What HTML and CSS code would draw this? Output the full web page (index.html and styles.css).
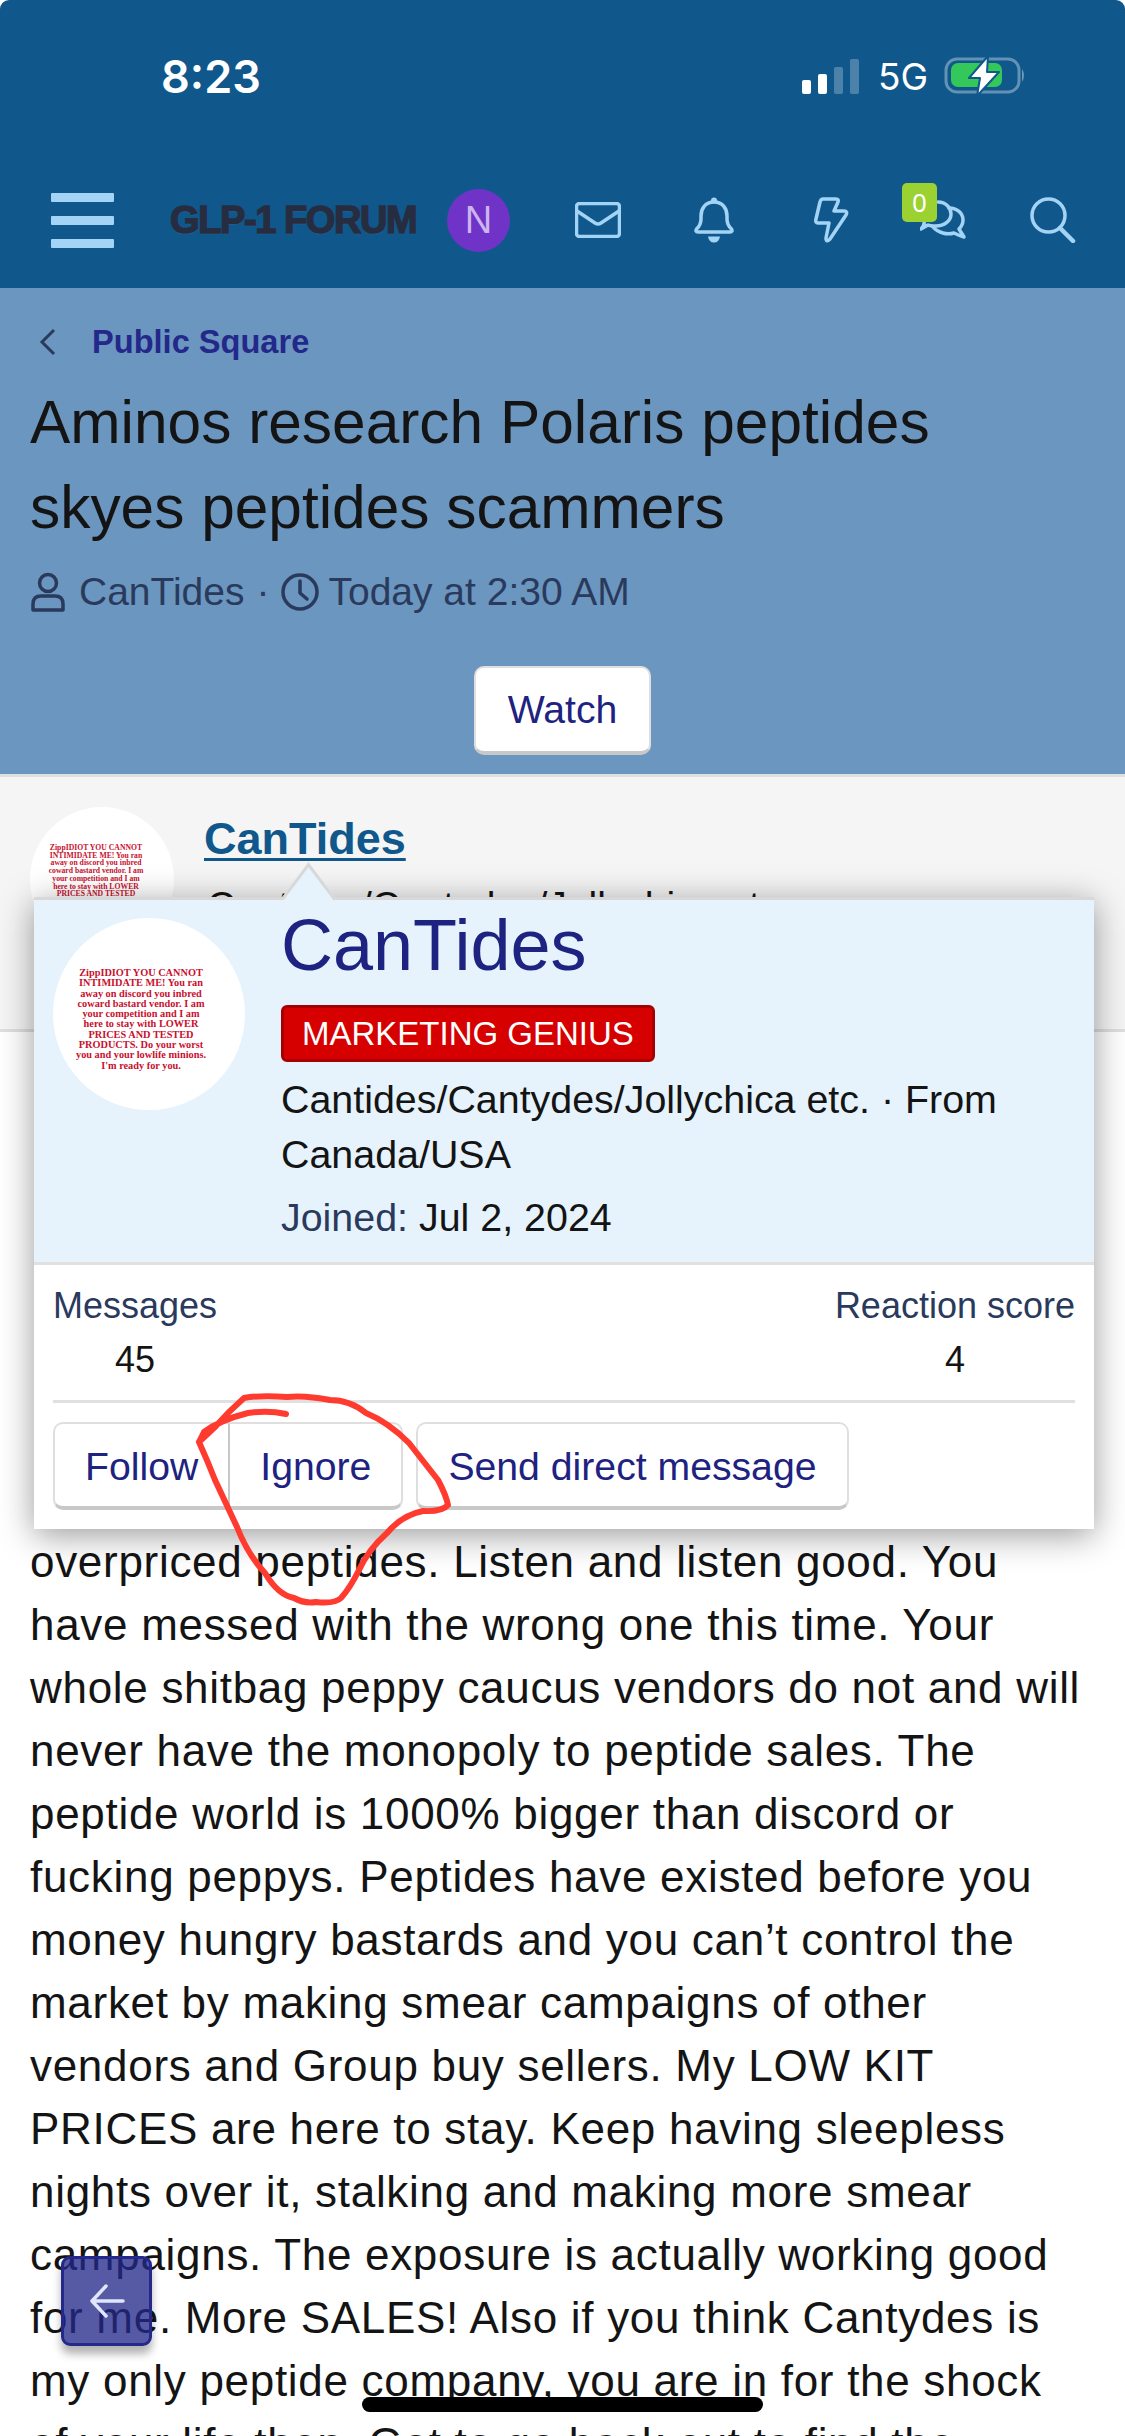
FILE: index.html
```html
<!DOCTYPE html>
<html lang="en">
<head>
    <meta charset="UTF-8">
    <meta name="viewport" content="width=device-width, initial-scale=1.0">
    <title>Aminos research Polaris peptides skyes peptides scammers | GLP-1 Forum</title>
    <link rel="stylesheet" href="styles.css">
</head>
<body>
    <div class="page">
        <header class="header">
            <div class="status">
                <span class="time">8:23</span>
                <div class="status-right">
                    <div class="signal">
                        <i class="bar bar1"></i><i class="bar bar2"></i><i class="bar bar3"></i><i class="bar bar4"></i>
                    </div>
                    <span class="net">5G</span>
                    <svg class="battery" width="84" height="42" viewBox="0 0 84 42">
                        <rect x="3" y="4" width="73" height="33" rx="11" fill="none" stroke="#fff" stroke-opacity="0.35" stroke-width="3"/>
                        <rect x="8" y="8" width="51" height="24" rx="7" fill="#34c759"/>
                        <path d="M79 14 Q83 20 79 27 Z" fill="#fff" fill-opacity="0.4"/>
                        <path d="M45 1 L26 23 H37 L34 41 L56 17 H44 Z" fill="#fff" stroke="#10588c" stroke-width="2" stroke-linejoin="round"/>
                    </svg>
                </div>
            </div>
            <nav class="nav">
                <div class="burger"><i></i><i></i><i></i></div>
                <a class="logo">GLP-1 FORUM</a>
                <span class="nav-avatar">N</span>
                <svg class="ico ico-mail" width="46" height="36" viewBox="0 0 46 36">
                    <rect x="1.5" y="1.5" width="43" height="33" rx="3"/>
                    <path d="M2 9 L20 21 Q23 23 26 21 L44 9"/>
                </svg>
                <svg class="ico ico-bell" width="40" height="46" viewBox="0 0 40 46">
                    <path d="M20 5 C11 5 7 12 7 19 L7 22 Q7 28 2.5 32 Q1 35 4 35 H36 Q39 35 37.5 32 Q33 28 33 22 L33 19 C33 12 29 5 20 5 Z"/>
                    <circle class="solid" cx="20" cy="3.5" r="3"/>
                    <path class="solid" d="M14 39.5 H26 Q25 45.5 20 45.5 Q15 45.5 14 39.5 Z"/>
                </svg>
                <svg class="ico ico-bolt" width="35" height="46" viewBox="0 0 35 46">
                    <path d="M9 2 H22 Q25 2 24 5 L20 14 H30 Q34 14 32 18 L16 42 Q12 46 12 41 L15 26 H4 Q1 26 2 22 L6 5 Q7 2 9 2 Z"/>
                </svg>
                <div class="chat">
                    <svg class="ico" width="47" height="40" viewBox="0 0 47 40">
                        <path d="M18 2 C26 2 31 8 31 14 C31 21 24 26 16 26 C12 26 10 26 8 25 L1 29 Q5 25 4 21"/>
                        <path d="M29 8 C37 8 43 13 43 20 C43 24 41 27 39 29 L44 37 Q38 35 34 33 C27 35 18 33 13 27"/>
                    </svg>
                    <span class="chat-badge">0</span>
                </div>
                <svg class="ico ico-search" width="46" height="46" viewBox="0 0 46 46">
                    <circle cx="18.5" cy="18.5" r="16.5"/>
                    <path class="thick" d="M30 31 L43 44"/>
                </svg>
            </nav>
        </header>

        <section class="thread-head">
            <div class="crumb">
                <svg class="crumb-arrow" width="18" height="28" viewBox="0 0 18 28"><path d="M15 2 L3 14 L15 26"/></svg>
                <a>Public Square</a>
            </div>
            <h1>Aminos research Polaris peptides skyes peptides scammers</h1>
            <div class="meta">
                <svg class="meta-ico" width="36" height="40" viewBox="0 0 36 40">
                    <circle cx="18" cy="11" r="8.5"/>
                    <path d="M3 38 V32 Q3 24 11 24 H25 Q33 24 33 32 V38 Z"/>
                </svg>
                <span>CanTides</span>
                <span class="dot">·</span>
                <svg class="meta-ico" width="38" height="38" viewBox="0 0 38 38">
                    <circle cx="19" cy="19" r="17"/>
                    <path d="M19 8 V20 L26 26"/>
                </svg>
                <span class="meta-date">Today at 2:30 AM</span>
            </div>
            <div class="watch-row"><a class="btn">Watch</a></div>
        </section>

        <section class="post-head">
            <div class="avatar avatar-small">
                <p>ZippIDIOT YOU CANNOT<br>INTIMIDATE ME! You ran<br>away on discord you inbred<br>coward bastard vendor. I am<br>your competition and I am<br>here to stay with LOWER<br>PRICES AND TESTED<br>PRODUCTS. Do your worst<br>you and your lowlife minions.<br>I'm ready for you.</p>
            </div>
            <div class="post-user">
                <a class="post-name">CanTides</a>
                <div class="post-title">Cantides/Cantydes/Jollychica etc.</div>
            </div>
        </section>

        <article class="post-body">
            overpriced peptides. Listen and listen good. You have messed with the wrong one this time. Your whole shitbag peppy caucus vendors do not and will never have the monopoly to peptide sales. The peptide world is 1000% bigger than discord or fucking peppys. Peptides have existed before you money hungry bastards and you can’t control the market by making smear campaigns of other vendors and Group buy sellers. My LOW KIT PRICES are here to stay. Keep having sleepless nights over it, stalking and making more smear campaigns. The exposure is actually working good for me. More SALES! Also if you think Cantydes is my only peptide company, you are in for the shock of your life then. Got to go back out to find the
        </article>

        <!-- member card over the post -->
        <div class="card">
            <div class="card-head">
                <div class="avatar avatar-big">
                    <p>ZippIDIOT YOU CANNOT<br>INTIMIDATE ME! You ran<br>away on discord you inbred<br>coward bastard vendor. I am<br>your competition and I am<br>here to stay with LOWER<br>PRICES AND TESTED<br>PRODUCTS. Do your worst<br>you and your lowlife minions.<br>I'm ready for you.</p>
                </div>
                <div class="card-info">
                    <div class="card-name">CanTides</div>
                    <span class="banner">MARKETING GENIUS</span>
                    <div class="card-title">Cantides/Cantydes/Jollychica etc. · From Canada/USA</div>
                    <div class="card-joined"><span>Joined:</span> Jul 2, 2024</div>
                </div>
            </div>
            <div class="card-stats">
                <div class="stat"><div class="stat-label">Messages</div><div>45</div></div>
                <div class="stat"><div class="stat-label">Reaction score</div><div>4</div></div>
            </div>
            <div class="card-actions">
                <div class="btn-group">
                    <a class="btn btn-card">Follow</a>
                    <a class="btn btn-card">Ignore</a>
                </div>
                <a class="btn btn-card">Send direct message</a>
            </div>
        </div>

        <!-- hand drawn circle from the screenshot -->
        <svg class="scribble" width="270" height="225" viewBox="0 0 270 225">
            <path d="M96 24 Q78 20 58 23 Q30 30 14 42 L9 52 Q18 72 25 90 L47 137 Q58 165 75 183 Q88 205 104 208 Q115 214 126 212 Q145 214 151 208 Q160 198 169 180 Q178 160 197 143 Q212 125 233 121 Q252 122 258 115 Q256 105 248 90 L219 53 Q198 32 176 23 Q160 10 140 10 Q115 5 97 7 Q70 5 54 8 Q38 22 25 37 L9 52"/>
        </svg>

        <a class="to-top">
            <svg width="36" height="34" viewBox="0 0 36 34"><path d="M17 2 L3 17 L17 32 M3 17 H34"/></svg>
        </a>
        <div class="home-bar"></div>
    </div>
</body>
</html>
```

FILE: styles.css
```css
* { box-sizing: border-box; }
html, body { margin: 0; padding: 0; background: #fff; }
body { font-family: "Liberation Sans", Arial, sans-serif; color: #141414; }
p { margin: 0; }
.page { position: relative; width: 1125px; height: 2436px; overflow: hidden; }

/* header */
.header { height: 288px; background: #10588c; border-radius: 9px 9px 0 0; }
.status { height: 152px; display: flex; align-items: center; justify-content: space-between; padding: 0 98px 0 161px; }
.time { font-family: Inter, sans-serif; font-weight: 600; font-size: 45px; color: #fff; }
.status-right { display: flex; align-items: center; }
.signal { display: flex; align-items: flex-end; gap: 7px; height: 35px; }
.bar { display: block; width: 9px; border-radius: 2px; background: rgba(255,255,255,0.25); }
.bar1 { height: 14px; background: #fff; }
.bar2 { height: 20px; background: #fff; }
.bar3 { height: 27px; }
.bar4 { height: 35px; }
.net { font-family: Inter, sans-serif; font-weight: 400; font-size: 37px; color: #fff; margin: 0 15px 0 19px; }
.battery { display: block; }

.nav { height: 136px; display: flex; align-items: center; padding-left: 51px; }
.burger { width: 63px; display: flex; flex-direction: column; gap: 14px; }
.burger i { display: block; height: 9px; background: #a3d3f5; border-radius: 1px; }
.logo { width: 247px; margin-left: 56px; font-weight: 700; font-size: 38px; letter-spacing: -1.4px; color: #272d41; -webkit-text-stroke: 1.5px #272d41; text-shadow: 0 1px 1px #3f6f96; white-space: nowrap; }
.nav-avatar { width: 63px; height: 63px; margin-left: 30px; border-radius: 50%; background: #6f33c8; color: #cbb4ef; font-size: 38px; display: flex; align-items: center; justify-content: center; }
.ico { display: block; flex: none; }
.ico path, .ico rect, .ico circle { fill: none; stroke: #a3d3f5; stroke-width: 3.5; stroke-linecap: round; stroke-linejoin: round; }
.ico .solid { fill: #a3d3f5; stroke: none; }
.ico .thick { stroke-width: 4.5; }
.ico-mail { margin-left: 65px; }
.ico-bell { margin-left: 73px; }
.ico-bolt { margin-left: 80px; }
.chat { position: relative; margin-left: 71px; }
.chat-badge { position: absolute; left: -18px; top: -17px; width: 35px; height: 39px; border-radius: 5px; background: #9bd130; color: #fff; font-family: "Noto Sans", sans-serif; font-size: 26px; line-height: 39px; text-align: center; }
.ico-search { margin-left: 63px; }

/* thread title area */
.thread-head { height: 489px; background: #6b96bf; border-bottom: 3px solid #dfdfdf; padding: 34px 30px 0; }
.crumb { height: 40px; display: flex; align-items: center; font-weight: 700; font-size: 32.6px; color: #23288a; }
.crumb-arrow { margin: 0 35px 0 9px; }
.crumb-arrow path { fill: none; stroke: #2a3a5c; stroke-width: 3; }
h1 { margin: 18px 0 0; font-weight: 400; font-size: 60.4px; line-height: 85px; color: #141414; width: 1000px; }
.meta { margin-top: 17px; height: 50px; display: flex; align-items: center; font-size: 39px; color: #2a3a5c; }
.meta-ico { flex: none; }
.meta-ico path, .meta-ico circle { fill: none; stroke: #2a3a5c; stroke-width: 3.5; stroke-linejoin: round; stroke-linecap: round; }
.meta-ico:first-child { margin-right: 13px; }
.dot { margin: 0 12px; }
.meta-date { margin-left: 9px; }
.watch-row { margin-top: 49px; display: flex; justify-content: center; }

.btn { display: flex; align-items: center; justify-content: center; height: 89px; padding: 0 32px; background: #fff; color: #1e2280; font-size: 39.2px; border: 2.5px solid #dfdfdf; border-bottom: 4px solid #c8c8c8; border-radius: 10px; white-space: nowrap; }

/* post */
.post-head { height: 255px; background: #f5f5f5; border-bottom: 3px solid #dfdfdf; padding: 30px 30px 0; display: flex; }
.avatar { flex: none; border-radius: 50%; background: #fff; overflow: hidden; text-align: center; font-family: "Liberation Serif", serif; font-weight: 700; color: #c8102e; white-space: nowrap; }
.avatar-small { width: 144px; height: 144px; padding: 37px 12px 0 0; font-size: 7.7px; line-height: 7.7px; }
.post-user { margin-left: 30px; padding-top: 4px; }
.post-name { display: block; font-weight: 700; font-size: 45px; line-height: 56px; color: #10588c; text-decoration: underline; text-decoration-thickness: 3px; text-underline-offset: 4px; }
.post-title { margin-top: 11px; font-size: 39px; line-height: 55px; white-space: nowrap; padding-left: 3px; }
.post-body { padding: 498px 42px 0 30px; font-size: 44px; letter-spacing: 0.7px; line-height: 63px; color: #141414; }

/* member card */
.card { position: absolute; left: 34px; top: 897px; width: 1060px; background: #fff; border-top: 3px solid #d8d8d8; box-shadow: 0 6px 32px rgba(0,0,0,0.4); }
.card::before { content: ""; position: absolute; left: 252px; top: -24px; width: 42px; height: 42px; background: #e6f3fc; border-left: 3px solid #d8d8d8; border-top: 3px solid #d8d8d8; transform: rotate(45deg) skew(8deg, 8deg); }
.card-head { position: relative; display: flex; background: #e6f3fc; border-bottom: 3px solid #e0e0e0; padding: 9px 19px 17px 19px; }
.avatar-big { width: 192px; height: 192px; margin-top: 9px; padding: 50px 16px 0 0; font-size: 10.3px; line-height: 10.3px; }
.card-info { margin-left: 36px; flex: 1; }
.card-name { font-size: 72px; line-height: 72px; color: #1e2280; }
.banner { display: block; width: fit-content; margin-top: 24px; height: 57px; padding: 0 18px; background: #d60000; border: 3px solid #a80000; border-radius: 6px; color: #fff; font-size: 33px; line-height: 51px; white-space: nowrap; }
.card-title { margin-top: 10px; font-size: 39.4px; line-height: 55px; color: #141414; }
.card-joined { margin-top: 8px; font-size: 39.4px; line-height: 55px; }
.card-joined span { color: #2a3a5c; }
.card-stats { display: flex; justify-content: space-between; padding: 14px 19px 13px; font-size: 36px; line-height: 54px; text-align: center; }
.stat-label { color: #2a3a5c; }
.card-actions { display: flex; gap: 13px; margin: 0 19px; padding: 19px 0; border-top: 3px solid #e0e0e0; }
.btn-group { display: flex; }
.btn-card { height: 88px; padding: 3px 30px 0; }
.btn-group .btn-card:first-child { border-radius: 10px 0 0 10px; border-right: 0; }
.btn-group .btn-card:last-child { border-radius: 0 10px 10px 0; border-left: 2.5px solid #c8c8c8; }

.scribble { position: absolute; left: 190px; top: 1390px; }
.scribble path { fill: none; stroke: #ff3b30; stroke-width: 6; stroke-linecap: round; stroke-linejoin: round; }

.to-top { position: absolute; left: 61px; top: 2256px; width: 91px; height: 90px; display: flex; align-items: center; justify-content: center; background: rgba(35,40,138,0.77); border: 3px solid #23288a; border-radius: 9px; box-shadow: 0 8px 8px rgba(0,0,0,0.3); }
.to-top path { fill: none; stroke: #dfe6fb; stroke-width: 3.5; stroke-linecap: round; stroke-linejoin: round; }

.home-bar { position: absolute; left: 362px; top: 2397px; width: 401px; height: 15px; background: #000; border-radius: 8px; }
```
